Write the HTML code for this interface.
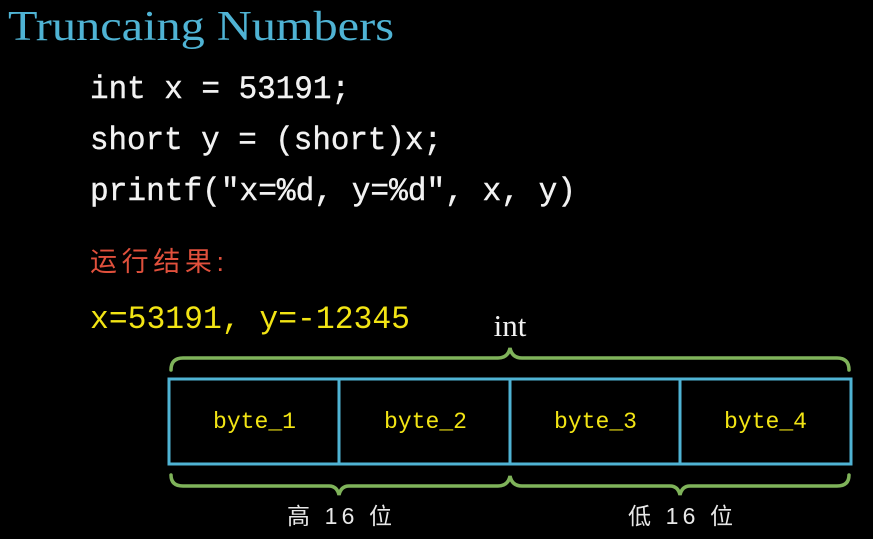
<!DOCTYPE html>
<html><head><meta charset="utf-8"><style>
html,body{margin:0;padding:0;background:#000;width:873px;height:539px;overflow:hidden}
</style></head><body>
<svg width="873" height="539" viewBox="0 0 873 539" xmlns="http://www.w3.org/2000/svg">
<rect width="873" height="539" fill="#000"/>
<text x="8" y="40" font-family="Liberation Serif, serif" font-size="42" fill="#4fb3d4" textLength="386" lengthAdjust="spacingAndGlyphs">Truncaing Numbers</text>
<g font-family="Liberation Mono, monospace" font-size="32" fill="#f2f2f2" stroke="#f2f2f2" stroke-width="0.4">
<text x="90" y="98" textLength="260" lengthAdjust="spacingAndGlyphs">int x = 53191;</text>
<text x="90" y="149" textLength="352" lengthAdjust="spacingAndGlyphs">short y = (short)x;</text>
<text x="90" y="200" textLength="486" lengthAdjust="spacingAndGlyphs">printf("x=%d, y=%d", x, y)</text>
</g>
<text x="90" y="271" font-family="Liberation Sans, Noto Sans CJK SC, sans-serif" font-size="27" fill="#e0503c" textLength="140" lengthAdjust="spacing" letter-spacing="6">运行结果:</text>
<text x="90" y="328" font-family="Liberation Mono, Noto Sans CJK SC, monospace" font-size="32" fill="#f2e414" textLength="320" lengthAdjust="spacingAndGlyphs">x=53191, y=-12345</text>
<text x="510" y="336" text-anchor="middle" font-family="Liberation Serif, serif" font-size="31" fill="#f2f2f2">int</text>
<g fill="none" stroke="#7fb35a" stroke-width="3.5" stroke-linecap="round">
<path d="M171 370 Q171 358 183 358 L498 358 Q508 358 510 348 Q512 358 522 358 L837 358 Q849 358 849 370"/>
<path d="M171 475 Q171 486 183 486 L329 486 Q337 486 339 495 Q341 486 349 486 L498 486 Q508 486 510 476 Q512 486 522 486 L670 486 Q678 486 680 495 Q682 486 690 486 L837 486 Q849 486 849 475"/>
</g>
<g fill="none" stroke="#4fb3d4" stroke-width="3">
<rect x="169" y="379" width="682" height="85"/>
<line x1="339" y1="379" x2="339" y2="464"/>
<line x1="510" y1="379" x2="510" y2="464"/>
<line x1="680" y1="379" x2="680" y2="464"/>
</g>
<g font-family="Liberation Mono, monospace" font-size="23" fill="#f2e414">
<text x="213" y="428" textLength="83" lengthAdjust="spacingAndGlyphs">byte_1</text>
<text x="384" y="428" textLength="83" lengthAdjust="spacingAndGlyphs">byte_2</text>
<text x="554" y="428" textLength="83" lengthAdjust="spacingAndGlyphs">byte_3</text>
<text x="724" y="428" textLength="83" lengthAdjust="spacingAndGlyphs">byte_4</text>
</g>
<g font-family="Liberation Sans, Noto Sans CJK SC, sans-serif" font-size="23" fill="#e8e8e8">
<text x="287" y="524" textLength="105" lengthAdjust="spacing">高 16 位</text>
<text x="628" y="524" textLength="105" lengthAdjust="spacing">低 16 位</text>
</g>
</svg>
</body></html>
